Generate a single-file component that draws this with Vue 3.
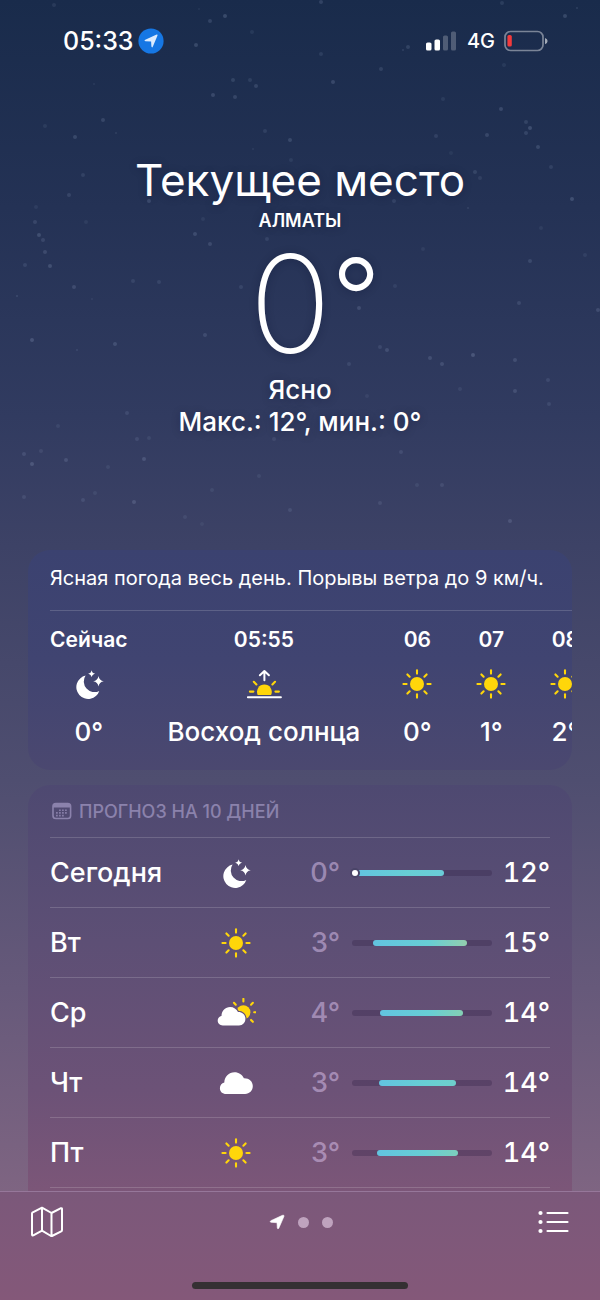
<script setup>
const hours = [
  { time: 'Сейчас', icon: 'moon', value: '0°' },
  { time: '05:55', icon: 'sunrise', value: 'Восход солнца' },
  { time: '06', icon: 'sun', value: '0°' },
  { time: '07', icon: 'sun', value: '1°' },
  { time: '08', icon: 'sun', value: '2°' },
]

const days = [
  { name: 'Сегодня', icon: 'moon', low: '0°', high: '12°', from: 3, to: 66, now: 2, tint: '#6accd8' },
  { name: 'Вт', icon: 'sun', low: '3°', high: '15°', from: 15, to: 82, tint: '#93cfae' },
  { name: 'Ср', icon: 'cloudsun', low: '4°', high: '14°', from: 20, to: 79, tint: '#84cfb4' },
  { name: 'Чт', icon: 'cloud', low: '3°', high: '14°', from: 19, to: 74, tint: '#6ecfcb' },
  { name: 'Пт', icon: 'sun', low: '3°', high: '14°', from: 18, to: 76, tint: '#7ccfbd' },
]

const rays = [0, 45, 90, 135, 180, 225, 270, 315]

// x, y, radius, opacity
const stars = [
  [54, 5, 2, 0.09], [199, 9, 1, 0.07], [210, 21, 2, 0.14], [225, 16, 2, 0.18], [252, 32, 2, 0.08],
  [196, 45, 2, 0.17], [321, 2, 2, 0.14], [502, 3, 2, 0.11], [565, 16, 2, 0.17], [577, 8, 1, 0.12],
  [408, 47, 2, 0.13], [403, 50, 1, 0.12], [321, 54, 2, 0.1], [381, 69, 2, 0.12], [504, 65, 2, 0.08],
  [233, 80, 2, 0.13], [250, 80, 2, 0.1], [256, 86, 2, 0.14], [333, 82, 2, 0.16], [213, 95, 2, 0.16],
  [235, 97, 2, 0.14], [94, 84, 1, 0.08], [443, 99, 2, 0.08], [501, 109, 2, 0.16], [103, 120, 2, 0.14],
  [45, 126, 2, 0.08], [75, 137, 2, 0.15], [116, 133, 1, 0.1], [265, 131, 2, 0.1], [290, 140, 2, 0.15],
  [436, 136, 2, 0.11], [487, 135, 2, 0.14], [526, 122, 2, 0.12], [530, 128, 2, 0.18], [526, 133, 2, 0.13],
  [538, 147, 2, 0.15], [291, 160, 2, 0.08], [253, 149, 1, 0.08], [451, 153, 2, 0.06], [551, 167, 2, 0.1],
  [475, 172, 2, 0.12], [480, 178, 2, 0.09], [83, 175, 2, 0.1], [69, 195, 2, 0.12], [36, 207, 2, 0.07],
  [149, 201, 2, 0.15], [394, 201, 2, 0.11], [572, 199, 2, 0.18], [468, 208, 1, 0.1], [35, 222, 2, 0.12],
  [86, 222, 2, 0.07], [39, 235, 2, 0.17], [43, 240, 2, 0.12], [45, 252, 2, 0.14], [25, 265, 2, 0.11],
  [50, 266, 2, 0.17], [203, 219, 2, 0.07], [195, 234, 2, 0.15], [210, 244, 2, 0.14], [267, 239, 2, 0.1],
  [541, 228, 2, 0.07], [423, 249, 2, 0.07], [530, 261, 2, 0.13], [585, 255, 2, 0.08], [74, 287, 2, 0.14],
  [17, 296, 1, 0.13], [92, 299, 1, 0.08], [133, 281, 2, 0.1], [159, 282, 2, 0.1], [241, 287, 2, 0.1],
  [395, 286, 2, 0.08], [359, 308, 2, 0.14], [519, 303, 2, 0.12], [598, 310, 2, 0.14], [32, 340, 2, 0.18],
  [115, 344, 2, 0.15], [77, 350, 1, 0.11], [205, 335, 2, 0.13], [380, 347, 2, 0.11], [387, 350, 2, 0.14],
  [430, 358, 2, 0.14], [442, 364, 2, 0.14], [473, 355, 2, 0.19], [515, 360, 2, 0.14], [349, 364, 2, 0.1],
  [548, 380, 2, 0.11], [460, 389, 2, 0.08], [515, 391, 2, 0.14], [549, 404, 2, 0.1], [367, 396, 2, 0.07],
  [127, 413, 2, 0.11], [58, 426, 2, 0.08], [137, 439, 2, 0.11], [149, 438, 2, 0.08], [274, 439, 2, 0.09],
  [401, 452, 2, 0.11], [24, 454, 2, 0.12], [41, 451, 2, 0.09], [32, 464, 2, 0.17], [66, 460, 2, 0.14],
  [144, 459, 2, 0.16], [108, 467, 2, 0.08], [259, 476, 2, 0.08], [442, 485, 2, 0.1], [417, 485, 2, 0.08],
  [95, 493, 2, 0.08], [83, 500, 2, 0.11], [134, 502, 2, 0.16], [24, 497, 2, 0.1], [212, 490, 2, 0.08],
  [290, 510, 2, 0.11], [380, 503, 2, 0.1], [185, 517, 2, 0.08], [510, 521, 2, 0.14], [202, 524, 2, 0.06],
]
</script>

<template>
  <div class="screen">
    <svg class="stars" aria-hidden="true">
      <circle v-for="(s, i) in stars" :key="i" :cx="s[0]" :cy="s[1]" :r="s[2]" :fill-opacity="s[3]" fill="#c3d5f5" />
    </svg>

    <svg class="defs" aria-hidden="true">
      <symbol id="moon" viewBox="0 0 36 30">
        <path d="M14.6 6.6A11.8 11.8 0 1 0 28.3 21.9A10.6 10.6 0 0 1 14.6 6.6Z" fill="#fff" />
        <path d="M27.5 7Q28.2 11.6 32.8 12.3Q28.2 13 27.5 17.6Q26.8 13 22.2 12.3Q26.8 11.6 27.5 7Z" fill="#fff" />
        <path d="M20.6 1.2Q21.1 4.2 24.1 4.7Q21.1 5.2 20.6 8.2Q20.1 5.2 17.1 4.7Q20.1 4.2 20.6 1.2Z" fill="#fff" />
      </symbol>
      <symbol id="sun" viewBox="0 0 36 30">
        <circle cx="18" cy="15" r="7" fill="#ffd60a" />
        <path
          v-for="r in rays" :key="r" d="M18 4.6V1.4" :transform="`rotate(${r} 18 15)`"
          stroke="#ffd60a" stroke-width="2.1" stroke-linecap="round"
        />
      </symbol>
      <symbol id="sunrise" viewBox="0 0 36 30">
        <path d="M11.7 26A7.4 7.4 0 1 1 25.1 26Z" fill="#ffd60a" />
        <path d="M3.9 22.6H7.4M29.4 22.6H32.9M7.8 12.8L10.4 15.4M29 12.8L26.4 15.4" stroke="#ffd60a" stroke-width="2.1" stroke-linecap="round" />
        <path d="M1.9 28.2H34.9M18.4 11.2V2.4M13.9 6.3L18.4 2L22.9 6.3" fill="none" stroke="#fff" stroke-width="2" stroke-linecap="round" stroke-linejoin="round" />
      </symbol>
      <symbol id="cloud" viewBox="0 0 36 30">
        <path d="M8.2 26C4.4 26 1.9 23.6 1.9 20.2C1.9 17.4 3.6 15.3 6.3 14.6C6.4 8.6 10.9 4.2 16.5 4.2C20.7 4.2 24.3 6.6 25.9 10.2C31 10 34.8 13.3 34.8 18.1C34.8 22.6 31.5 26 27.1 26Z" fill="#fff" />
      </symbol>
      <symbol id="cloudsun" viewBox="0 0 40 30">
        <circle cx="27.4" cy="14.3" r="7" fill="#ffd60a" />
        <path
          v-for="r in [-45, 0, 45, 90, 135]" :key="r" d="M27.4 3.5V.9" :transform="`rotate(${r} 27.4 14.3)`"
          stroke="#ffd60a" stroke-width="2.1" stroke-linecap="round"
        />
        <path d="M6.8 27.5C3.7 27.5 1.7 25.5 1.7 22.6C1.7 20.2 3.2 18.4 5.5 17.9C5.6 12.8 9.4 9 14.1 9C17.6 9 20.6 11 22 14C26.3 13.9 29.4 16.8 29.4 20.8C29.4 24.6 26.7 27.5 23 27.5Z" fill="#fff" stroke="#645077" stroke-width="2.4" paint-order="stroke" />
      </symbol>
    </svg>

    <header class="status">
      <div class="status-left">
        <time>05:33</time>
        <svg width="26" height="26" viewBox="0 0 26 26" aria-hidden="true">
          <circle cx="13" cy="13" r="12.6" fill="#1677e4" />
          <path d="M19.2 6.6Q19.8 6.9 19.4 7.8L14.8 18.7Q14 20.1 13.4 18.6L13.1 13.6L7.6 13.2Q5.6 12.7 7.3 11.7L18.1 6.7Q18.8 6.4 19.2 6.6Z" fill="#dcecff" />
        </svg>
      </div>
      <div class="status-right">
        <svg width="32" height="20" viewBox="0 0 32 20" aria-hidden="true">
          <rect x="0" y="11.5" width="5.5" height="8" rx="1.6" fill="#fff" />
          <rect x="8.5" y="8.500" width="5.5" height="11" rx="1.6" fill="#fff" />
          <rect x="17" y="4.500" width="5" height="15" rx="1.6" fill="#fff" fill-opacity=".23" />
          <rect x="25" y="0.5" width="5" height="19" rx="1.6" fill="#fff" fill-opacity=".23" />
        </svg>
        <span class="net">4G</span>
        <svg width="44" height="22" viewBox="0 0 44 22" aria-hidden="true">
          <rect x="1" y="1.5" width="38" height="19" rx="5.5" fill="none" stroke="#fff" stroke-opacity=".42" stroke-width="1.7" />
          <rect x="3.4" y="5" width="4.4" height="11.5" rx="1.6" fill="#f23a3c" />
          <path d="M41 8Q43.6 8.8 43.6 11T41 14.3Z" fill="#fff" fill-opacity=".6" />
        </svg>
      </div>
    </header>

    <main class="content">
      <section class="hero">
        <h1>Текущее место</h1>
        <p class="city">АЛМАТЫ</p>
        <p class="temp">0<span class="deg">°</span></p>
        <p class="cond">Ясно</p>
        <p class="cond">Макс.: 12°, мин.: 0°</p>
      </section>

      <section class="card hourly">
        <p class="summary">Ясная погода весь день. Порывы ветра до 9 км/ч.</p>
        <ul class="hours">
          <li v-for="h in hours" :key="h.time">
            <span class="hour">{{ h.time }}</span>
            <svg class="icon"><use :href="'#' + h.icon" /></svg>
            <span class="value">{{ h.value }}</span>
          </li>
        </ul>
      </section>

      <section class="card daily">
        <h2>
          <svg width="20" height="18" viewBox="0 0 20 18" aria-hidden="true">
            <rect x="1" y="1.5" width="17.6" height="15" rx="2.8" fill="none" stroke="currentColor" stroke-width="1.6" />
            <path d="M1 5.4V3.5Q1 1.5 3.5 1.5H16Q18.6 1.5 18.6 3.5V5.4Z" fill="currentColor" />
            <path d="M7.1 8.2H15.6M4.1 10.9H15.6M4.1 13.6H12.6" stroke="currentColor" stroke-width="1.6" stroke-dasharray="1.6 1.4" />
          </svg>
          ПРОГНОЗ НА 10 ДНЕЙ
        </h2>
        <ul class="days">
          <li v-for="d in days" :key="d.name">
            <span>{{ d.name }}</span>
            <svg class="icon" :class="{ wide: d.icon === 'cloudsun' }"><use :href="'#' + d.icon" /></svg>
            <span class="low">{{ d.low }}</span>
            <span class="track">
              <span class="range" :style="{ left: d.from + '%', right: 100 - d.to + '%', '--tint': d.tint }"></span>
              <span v-if="d.now" class="now" :style="{ left: d.now + '%' }"></span>
            </span>
            <span class="high">{{ d.high }}</span>
          </li>
        </ul>
      </section>
    </main>

    <footer class="bar">
      <nav class="tools">
        <button type="button" aria-label="Карта">
          <svg width="34" height="32" viewBox="0 0 34 32" fill="none" stroke="#fff" stroke-width="2" stroke-linejoin="round" stroke-linecap="round">
            <path d="M2.3 6.7L12 1.7L21.5 7L31 2.2Q32 2 32 3V24Q32 25 31.2 25.4L22 30Q21.5 30.2 21 30L12 24.7L3.3 29.3Q2 29.7 2 28.5V7.5Q2 7 2.3 6.7ZM12 1.7V24.7M21.5 7V30" />
          </svg>
        </button>
        <div class="pages">
          <svg width="16" height="16" viewBox="0 0 16 16" aria-hidden="true">
            <path d="M14.7 1.3Q15.3 1.7 14.9 2.6L9.8 14.2Q8.8 15.6 8.3 14L8 8.7L2 8.3Q.2 7.7 1.8 6.7L13.5 1.3Q14.3 1 14.7 1.3Z" fill="#fff" stroke="#fff" stroke-width=".6" />
          </svg>
          <i></i>
          <i></i>
        </div>
        <button type="button" aria-label="Список">
          <svg width="32" height="24" viewBox="0 0 32 24">
            <path d="M9.5 3H29.5M9.5 12H29.5M9.500 21H29.5" stroke="#fff" stroke-width="2.2" stroke-linecap="round" />
            <circle cx="2.500" cy="3" r="2.1" fill="#fff" /><circle cx="2.5" cy="12" r="2.1" fill="#fff" /><circle cx="2.5" cy="21" r="2.1" fill="#fff" />
          </svg>
        </button>
      </nav>
      <div class="home"></div>
    </footer>
  </div>
</template>

<style>
body {
  margin: 0;
}
</style>

<style scoped>
.screen {
  position: relative;
  box-sizing: border-box;
  height: 100vh;
  display: flex;
  flex-direction: column;
  overflow: hidden;
  color: #fff;
  font-family: Inter, "Liberation Sans", sans-serif;
  background: linear-gradient(#192b4b 0%, #243255 16%, #313b60 32%, #3d4266 42%, #4f4e70 60%, #66597a 76%, #7f6582 92%);
}
p, h1, h2, ul {
  margin: 0;
  padding: 0;
  font-weight: 400;
}
ul {
  list-style: none;
}
.stars {
  position: absolute;
  inset: 0;
  width: 100%;
  height: 100%;
}
.defs {
  position: absolute;
  width: 0;
  height: 0;
}
.status {
  position: relative;
  flex: none;
  display: flex;
  justify-content: space-between;
  align-items: center;
  height: 82px;
  padding: 0 52px 0 63px;
}
.status-left, .status-right {
  display: flex;
  align-items: center;
}
.status-left {
  gap: 4px;
  font-size: 25px;
  font-weight: 500;
}
.status-right {
  gap: 9px;
}
.net {
  font-size: 20px;
  font-weight: 500;
}
.content {
  position: relative;
  flex: 1;
  min-height: 0;
  overflow: hidden;
  padding: 0 28px;
}
.hero {
  padding: 70px 0 112px;
  text-align: center;
  text-shadow: 0 1px 8px rgba(10, 18, 45, 0.3);
}
h1 {
  font-size: 44px;
  line-height: 56px;
}
.city {
  font-size: 18px;
  line-height: 26px;
  font-weight: 600;
}
.temp {
  display: flex;
  justify-content: center;
  align-items: flex-start;
  font-size: 136px;
  line-height: 140px;
  font-weight: 200;
  font-optical-sizing: none;
  padding-left: 30px;
}
.deg {
  font-size: 108px;
  line-height: 126px;
  font-weight: 300;
}
.cond {
  font-size: 26px;
  line-height: 32px;
  font-weight: 500;
}
.card {
  box-sizing: border-box;
  padding-left: 22px;
  border-radius: 22px;
  overflow: hidden;
}
.hourly {
  height: 220px;
  margin-bottom: 15px;
  background: linear-gradient(#3b4270, #404471 50%, #4b4870);
}
.summary {
  font-size: 20px;
  line-height: 24px;
  padding: 16px 0 20px;
  white-space: nowrap;
  border-bottom: 1px solid rgba(255, 255, 255, 0.16);
}
.hours {
  display: flex;
  gap: 40px;
  padding-top: 17px;
}
.hours li {
  flex: none;
  min-width: 34px;
  display: flex;
  flex-direction: column;
  align-items: center;
  white-space: nowrap;
}
.hour {
  font-size: 21px;
  line-height: 24px;
  font-weight: 600;
}
.icon {
  width: 36px;
  height: 30px;
}
.icon.wide {
  width: 40px;
}
.hours .icon {
  margin: 17px -3px;
}
.value {
  font-size: 26px;
  line-height: 32px;
  font-weight: 500;
}
.daily {
  padding-right: 22px;
  padding-bottom: 32px;
  background: linear-gradient(#4e4971, #5d4f75 36%, #6c5277 70%, #7c5678 94%);
}
h2 {
  display: flex;
  align-items: center;
  gap: 7px;
  height: 52px;
  padding-left: 2px;
  font-size: 18px;
  font-weight: 500;
  color: #8b82ac;
}
.days li {
  display: grid;
  grid-template-columns: 162fr 48px 80px 152fr 58px;
  align-items: center;
  height: 69px;
  border-top: 1px solid rgba(255, 255, 255, 0.16);
  font-size: 27px;
  font-weight: 500;
}
.days li:last-child {
  border-bottom: 1px solid rgba(255, 255, 255, 0.16);
}
.days .icon {
  justify-self: center;
}
.low, .high {
  text-align: right;
}
.low {
  color: rgba(214, 190, 232, 0.55);
}
.high {
  font-variant-numeric: tabular-nums;
}
.track {
  position: relative;
  height: 6px;
  margin-left: 12px;
  border-radius: 3px;
  background: rgba(45, 30, 65, 0.3);
}
.range, .now {
  position: absolute;
  top: 0;
  height: 6px;
  border-radius: 3px;
}
.range {
  background: linear-gradient(90deg, #62c4e0, #67ced4 60%, var(--tint));
}
.now {
  width: 6px;
  margin-left: -3px;
  background: #fff;
  box-shadow: 0 0 0 2px #4a4468;
}
.bar {
  position: relative;
  flex: none;
  height: 108px;
  border-top: 1px solid #96779a;
  background: linear-gradient(#7b587a, #845879);
}
.tools {
  display: flex;
  justify-content: space-between;
  align-items: center;
  height: 60px;
  padding: 0 30px;
}
button {
  display: flex;
  padding: 0;
  border: 0;
  background: none;
}
.pages {
  display: flex;
  align-items: center;
  gap: 13px;
}
.pages i {
  width: 11px;
  height: 11px;
  border-radius: 50%;
  background: #bfa3be;
}
.home {
  width: 36%;
  height: 7px;
  margin: 30px auto 0;
  border-radius: 4px;
  background: #353033;
}
</style>
